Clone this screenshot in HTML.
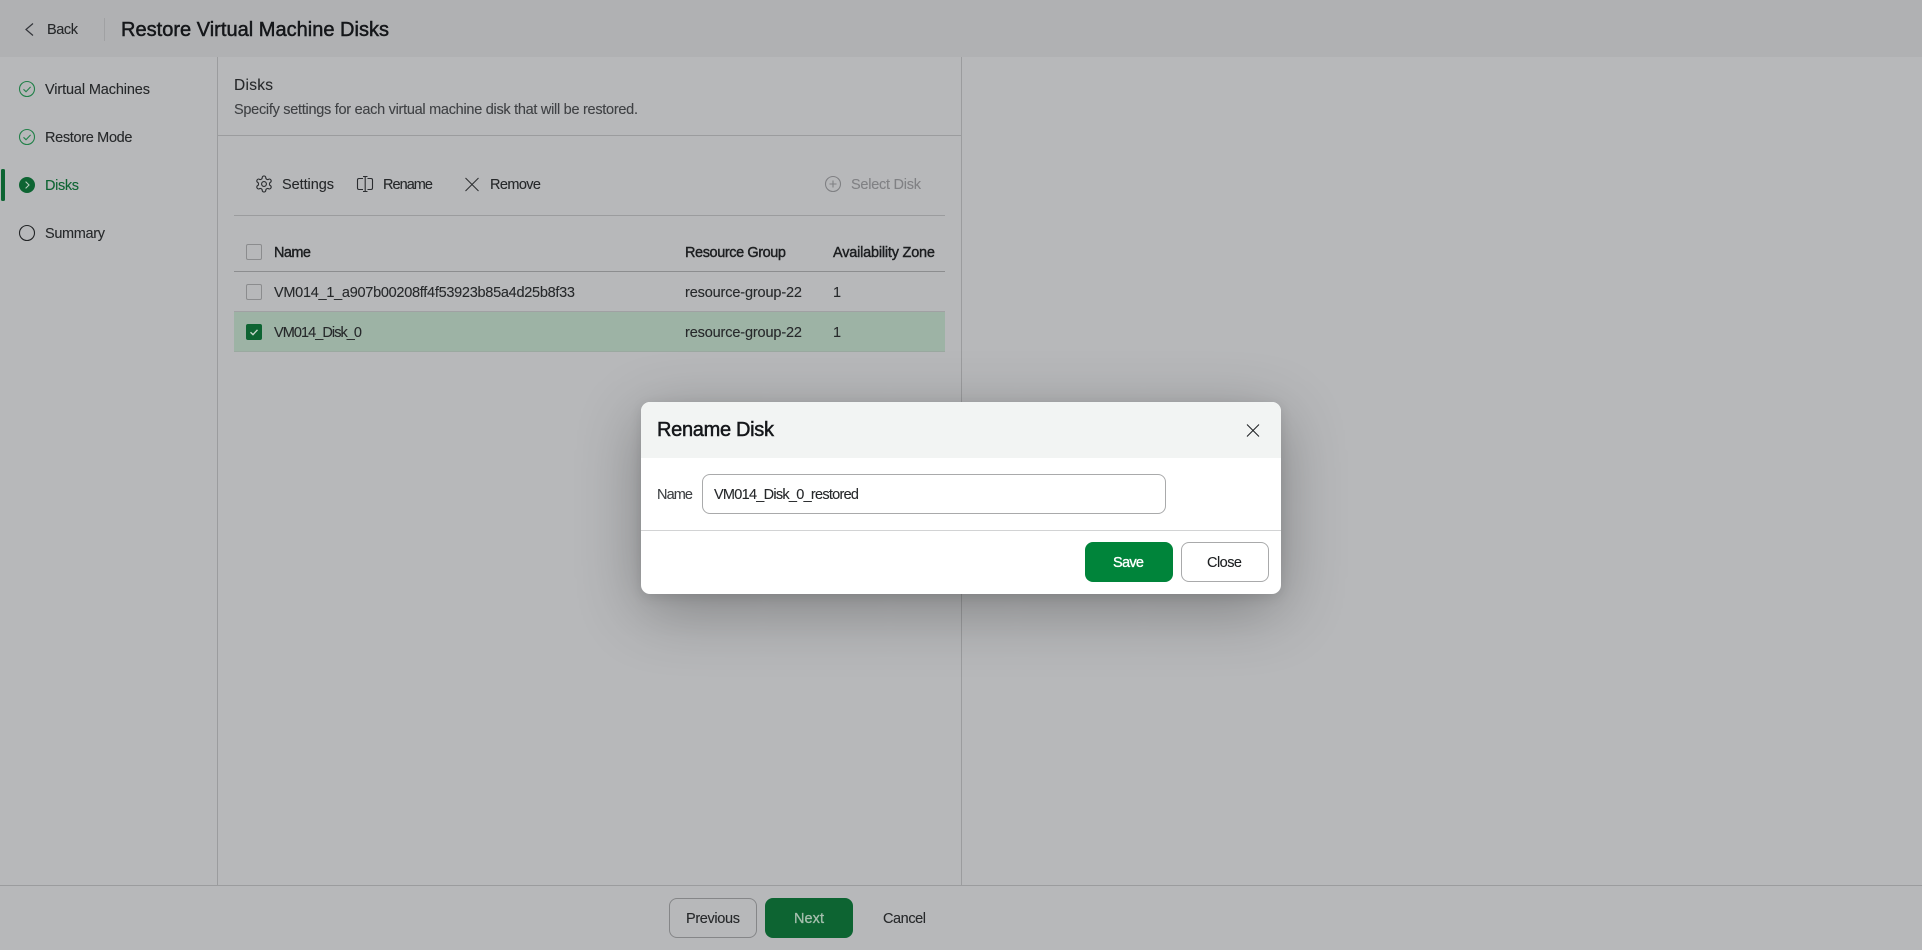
<!DOCTYPE html>
<html><head><meta charset="utf-8"><title>Restore Virtual Machine Disks</title>
<style>
html,body{margin:0;padding:0;width:1922px;height:950px;overflow:hidden;background:#b7b8ba}
svg{position:absolute;left:0;top:0;display:block}
text{font-family:"Liberation Sans",Arial,sans-serif;font-size:14.5px;fill:#26282a;white-space:pre;stroke:#26282a;stroke-width:.1px}
.m{stroke:#1c1e20;stroke-width:.4px;fill:#1c1e20}
.t{font-size:20px;stroke:#15171a;stroke-width:.5px;fill:#15171a}
.g{fill:#3f4144;stroke:#3f4144}
.d{fill:#808184;stroke:#808184}
#modal{position:absolute;left:641px;top:402px;width:640px;height:192px;border-radius:9px;background:#fff;box-shadow:0 16px 64px rgba(0,0,0,.3),0 3px 12px rgba(0,0,0,.1)}
</style></head>
<body>
<svg width="1922" height="950" viewBox="0 0 1922 950" fill="none">
<rect x="0" y="0" width="1922" height="57" fill="#b0b1b3"/>
<path d="M104.500 18v23" stroke="#a0a1a3"/>
<path d="M33 23.500L26 29.500L33 35.500" stroke="#33353a" stroke-width="1.200"/>
<text x="47" y="34" textLength="31">Back</text>
<text x="121" y="36" class="t" textLength="268">Restore Virtual Machine Disks</text>

<path d="M217.500 57V885M961.500 57V885" stroke="#9b9c9e"/>
<path d="M218 135.500H962M234 215.500H945" stroke="#9b9c9e"/>
<path d="M234 271.500H945" stroke="#8c8d8f"/>
<path d="M234 311.500H945" stroke="#a0a1a3"/>
<path d="M0 885.500H1922" stroke="#9b9c9e"/>

<circle cx="27" cy="89" r="7.500" stroke="#23814a" stroke-width="1.100"/>
<path d="M23.500 89.300l2.500 2.400 4.600-4.800" stroke="#23814a" stroke-width="1.100"/>
<text x="45" y="94" textLength="105">Virtual Machines</text>
<circle cx="27" cy="137" r="7.500" stroke="#23814a" stroke-width="1.100"/>
<path d="M23.500 137.300l2.500 2.400 4.600-4.800" stroke="#23814a" stroke-width="1.100"/>
<text x="45" y="142" textLength="87.500">Restore Mode</text>
<rect x="1" y="169" width="4" height="32" rx="1.500" fill="#0d6432"/>
<circle cx="27" cy="185" r="8" fill="#0d6432"/>
<path d="M25.600 181.600L29 185L25.600 188.400" stroke="#b7cbbd" stroke-width="1.100"/>
<text x="45" y="190" textLength="34" style="fill:#0d6432;stroke:#0d6432">Disks</text>
<circle cx="27" cy="233" r="7.500" stroke="#232527" stroke-width="1.100"/>
<text x="45" y="238" textLength="60">Summary</text>

<text x="234" y="90" textLength="39" style="font-size:15.500px">Disks</text>
<text x="234" y="114" class="g" textLength="404">Specify settings for each virtual machine disk that will be restored.</text>

<g transform="translate(254.400 174.400) scale(.8)" stroke="#2b2d30" stroke-width="1.400">
<path d="M12.220 2h-.44a2 2 0 0 0-2 2v.18a2 2 0 0 1-1 1.730l-.43.25a2 2 0 0 1-2 0l-.15-.08a2 2 0 0 0-2.730.73l-.22.38a2 2 0 0 0 .73 2.730l.15.1a2 2 0 0 1 1 1.720v.51a2 2 0 0 1-1 1.740l-.15.09a2 2 0 0 0-.73 2.730l.22.38a2 2 0 0 0 2.730.73l.15-.08a2 2 0 0 1 2 0l.43.25a2 2 0 0 1 1 1.730V20a2 2 0 0 0 2 2h.44a2 2 0 0 0 2-2v-.18a2 2 0 0 1 1-1.730l.43-.25a2 2 0 0 1 2 0l.15.08a2 2 0 0 0 2.730-.73l.22-.39a2 2 0 0 0-.73-2.730l-.15-.08a2 2 0 0 1-1-1.740v-.5a2 2 0 0 1 1-1.740l.15-.09a2 2 0 0 0 .73-2.730l-.22-.38a2 2 0 0 0-2.730-.73l-.15.08a2 2 0 0 1-2 0l-.43-.25a2 2 0 0 1-1-1.730V4a2 2 0 0 0-2-2z"/>
<circle cx="12" cy="12" r="3"/>
</g>
<text x="282" y="189" textLength="52">Settings</text>
<path d="M363 178.500H359a1.500 1.500 0 0 0-1.500 1.500v8a1.500 1.500 0 0 0 1.500 1.500H363M367.500 178.500H371a1.500 1.500 0 0 1 1.500 1.500v8a1.500 1.500 0 0 1-1.500 1.500H367.500M363 176.500H367.500M365.200 176.500V191.500M363 191.500H367.500" stroke="#2b2d30" stroke-width="1.100"/>
<text x="383" y="189" textLength="50">Rename</text>
<path d="M465.500 178L478.500 191M478.500 178L465.500 191" stroke="#2b2d30" stroke-width="1"/>
<text x="490" y="189" textLength="51">Remove</text>
<circle cx="833" cy="184" r="7.500" stroke="#808184" stroke-width="1.100"/>
<path d="M833 180.500V187.500M829.500 184H836.500" stroke="#808184" stroke-width="1.100"/>
<text x="851" y="189" class="d" textLength="70">Select Disk</text>

<rect x="246.500" y="244.500" width="15" height="15" rx="1.500" stroke="#8b8c8e"/>
<text x="274" y="257" class="m" textLength="37">Name</text>
<text x="685" y="257" class="m" textLength="101">Resource Group</text>
<text x="833" y="257" class="m" textLength="102">Availability Zone</text>

<rect x="246.500" y="284.500" width="15" height="15" rx="1.500" stroke="#8b8c8e"/>
<text x="274" y="297" textLength="301">VM014_1_a907b00208ff4f53923b85a4d25b8f33</text>
<text x="685" y="297" textLength="117">resource-group-22</text>
<text x="833" y="297">1</text>

<rect x="234" y="312" width="711" height="39" fill="#9db3a5"/>
<path d="M234 351.500H945" stroke="#9aa9a0"/>
<rect x="246" y="324" width="16" height="16" rx="2" fill="#0d6432"/>
<path d="M250.500 332.200l2.500 2.400 4.500-4.800" stroke="#c5d6ca" stroke-width="1.400"/>
<text x="274" y="337" textLength="88">VM014_Disk_0</text>
<text x="685" y="337" textLength="117">resource-group-22</text>
<text x="833" y="337">1</text>

<rect x="669.500" y="898.500" width="87" height="39" rx="7.500" stroke="#858688"/>
<text x="686" y="923" textLength="54">Previous</text>
<rect x="765" y="898" width="88" height="40" rx="8" fill="#0d6432"/>
<text x="794" y="923" textLength="30" style="fill:#a6bfae;stroke:#a6bfae;stroke-width:.3px">Next</text>
<text x="883" y="923" textLength="43">Cancel</text>
</svg>

<div id="modal"></div>
<svg width="1922" height="950" viewBox="0 0 1922 950" fill="none">
<path d="M641 458V411a9 9 0 0 1 9-9H1272a9 9 0 0 1 9 9V458Z" fill="#f2f4f3"/>
<text x="657" y="436" class="t" textLength="117">Rename Disk</text>
<path d="M1247 424.500L1259 436.500M1259 424.500L1247 436.500" stroke="#1c1e20" stroke-width="1"/>
<text x="657" y="499" textLength="36" class="g">Name</text>
<rect x="702.500" y="474.500" width="463" height="39" rx="7.500" fill="#fff" stroke="#a9aaab"/>
<text x="714" y="499" textLength="145">VM014_Disk_0_restored</text>
<path d="M641 530.500H1281" stroke="#d2d3d4"/>
<rect x="1085" y="542" width="88" height="40" rx="8" fill="#00843a"/>
<text x="1113" y="567" textLength="31" style="fill:#fff;stroke:#fff;stroke-width:.35px">Save</text>
<rect x="1181.500" y="542.500" width="87" height="39" rx="7.500" fill="#fff" stroke="#a9aaab"/>
<text x="1207" y="567" textLength="35" style="fill:#1c1e20">Close</text>
</svg>
</body></html>
